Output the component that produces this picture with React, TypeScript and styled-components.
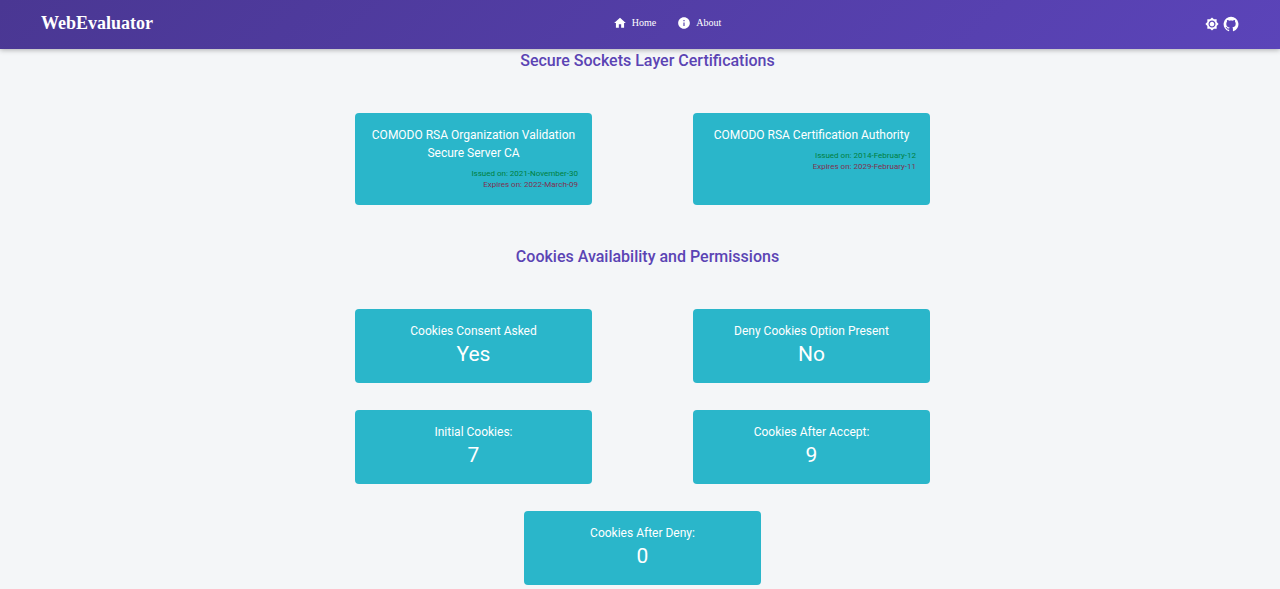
import React from "react";
import styled, { createGlobalStyle } from "styled-components";
import { MdHome, MdInfo, MdBrightnessHigh } from "react-icons/md";

const GlobalStyle = createGlobalStyle`
  * { box-sizing: border-box; }
  body {
    margin: 0;
    background: #f4f6f8;
    font-family: Roboto, "Liberation Sans", sans-serif;
  }
  h1, h2, h3, p { margin: 0; }
`;

const Header = styled.header`
  position: sticky;
  top: 0;
  z-index: 1;
  display: grid;
  grid-template-columns: 1fr auto 1fr;
  align-items: center;
  height: 49px;
  padding: 0 41px 3px;
  background: linear-gradient(135deg, #4a3793, #5b44b9);
  box-shadow: 0 1px 5px rgba(0, 0, 0, 0.3);
  color: #fff;
  font-family: "Liberation Serif", serif;
`;

const Brand = styled.a`
  justify-self: start;
  color: inherit;
  font-size: 18px;
  font-weight: 700;
  line-height: 20px;
  text-decoration: none;
`;

const Nav = styled.nav`
  display: flex;
  gap: 21px;
  margin-left: 54px;
`;

const NavLink = styled.a`
  display: flex;
  align-items: center;
  gap: 5px;
  color: inherit;
  font-size: 10px;
  line-height: 14px;
  text-decoration: none;
`;

const Actions = styled.div`
  display: flex;
  align-items: center;
  justify-self: end;
  gap: 4px;
  padding-top: 2px;
`;

const ThemeButton = styled.button`
  display: flex;
  padding: 0;
  border: 0;
  background: none;
  color: inherit;
`;

const RepoLink = styled.a`
  display: flex;
  color: inherit;
`;

const Main = styled.main`
  padding: 0 0 4px 5px;
`;

const Section = styled.section`
  & + & {
    padding-top: 40px;
  }
`;

const SectionTitle = styled.h2`
  padding-left: 10px;
  margin-bottom: 40px;
  color: #5b44b4;
  font-size: 16px;
  font-weight: 500;
  line-height: 24px;
  text-align: center;
`;

const Cards = styled.div`
  display: flex;
  flex-wrap: wrap;
  justify-content: center;
  gap: 27px 101px;
  max-width: 600px;
  margin: 0 auto;
`;

const Card = styled.article`
  width: 237px;
  padding: 13px 14px 15px;
  border-radius: 4px;
  background: #2ab6ca;
  color: #fff;
  text-align: center;
`;

const CardTitle = styled.h3`
  font-size: 12px;
  font-weight: 400;
  line-height: 18px;
`;

const CardValue = styled.p`
  font-size: 21px;
  line-height: 28px;
`;

const Dates = styled.div`
  padding-top: 6px;
  font-size: 8px;
  line-height: 11px;
  text-align: right;
`;

const DateLine = styled.p<{ $color: string }>`
  color: ${(p) => p.$color};
`;

const certificates = [
  { name: "COMODO RSA Organization Validation Secure Server CA", issued: "2021-November-30", expires: "2022-March-09" },
  { name: "COMODO RSA Certification Authority", issued: "2014-February-12", expires: "2029-February-11" },
];

const cookies = [
  { label: "Cookies Consent Asked", value: "Yes" },
  { label: "Deny Cookies Option Present", value: "No" },
  { label: "Initial Cookies:", value: "7" },
  { label: "Cookies After Accept:", value: "9" },
  { label: "Cookies After Deny:", value: "0" },
];

const GitHubIcon = () => (
  <svg width="16" height="16" viewBox="0 0 24 24" fill="currentColor" aria-hidden="true">
    <path d="M12 1.27a11 11 0 00-3.48 21.46c.55.09.73-.28.73-.55v-1.84c-3.03.64-3.67-1.46-3.67-1.46-.55-1.29-1.28-1.65-1.28-1.65-.92-.65.1-.65.1-.65 1.1 0 1.73 1.1 1.73 1.1.92 1.65 2.57 1.2 3.21.92a2 2 0 01.64-1.47c-2.47-.27-5.04-1.19-5.04-5.5 0-1.1.46-2.1 1.2-2.84a3.76 3.76 0 010-2.93s.91-.28 3.11 1.1c1.8-.49 3.7-.49 5.5 0 2.1-1.38 3.02-1.1 3.02-1.1a3.76 3.76 0 01.1 2.93c.83.74 1.2 1.74 1.2 2.94 0 4.21-2.57 5.13-5.04 5.4.45.37.82.92.82 2.02v3.03c0 .27.1.64.73.55A11 11 0 0012 1.27" />
  </svg>
);

export default function App() {
  return (
    <>
      <GlobalStyle />
      <Header>
        <Brand href="#">WebEvaluator</Brand>
        <Nav>
          <NavLink href="#home"><MdHome size={14} />Home</NavLink>
          <NavLink href="#about"><MdInfo size={14} />About</NavLink>
        </Nav>
        <Actions>
          <ThemeButton type="button" aria-label="Toggle theme"><MdBrightnessHigh size={14} /></ThemeButton>
          <RepoLink href="#github" aria-label="GitHub"><GitHubIcon /></RepoLink>
        </Actions>
      </Header>
      <Main>
        <Section>
          <SectionTitle>Secure Sockets Layer Certifications</SectionTitle>
          <Cards>
            {certificates.map((c) => (
              <Card key={c.name}>
                <CardTitle>{c.name}</CardTitle>
                <Dates>
                  <DateLine $color="#008040">Issued on: {c.issued}</DateLine>
                  <DateLine $color="#803050">Expires on: {c.expires}</DateLine>
                </Dates>
              </Card>
            ))}
          </Cards>
        </Section>
        <Section>
          <SectionTitle>Cookies Availability and Permissions</SectionTitle>
          <Cards>
            {cookies.map((c) => (
              <Card key={c.label}>
                <CardTitle>{c.label}</CardTitle>
                <CardValue>{c.value}</CardValue>
              </Card>
            ))}
          </Cards>
        </Section>
      </Main>
    </>
  );
}
